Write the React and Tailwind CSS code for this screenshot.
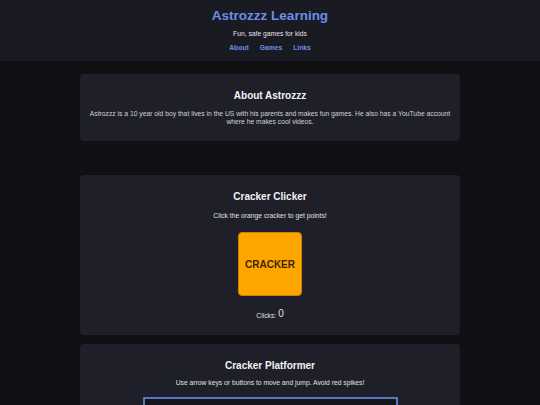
import React, { useState } from "react";

function Card({ title, children, className = "" }) {
  return (
    <section className={`bg-[#1e1f29] rounded-[4px] px-[8px] text-center ${className}`}>
      <h2 className="text-[10px] leading-[12px] font-bold text-[#f2f2f2]">{title}</h2>
      {children}
    </section>
  );
}

export default function App() {
  const [clicks, setClicks] = useState(0);

  return (
    <div className="min-h-[405px] bg-[#0f1014] font-['Liberation_Sans',Arial,sans-serif] text-[#d6d6d6]">
      {/* Header */}
      <header className="bg-[#191a22] pt-[8px] pb-[9px] text-center">
        <h1 className="text-[13.5px] leading-[16px] font-bold text-[#6b8ee6]">Astrozzz Learning</h1>
        <p className="mt-[6px] text-[6.75px] leading-[8px] text-[#e4e4e4]">Fun, safe games for kids</p>
        <nav className="mt-[6px] flex justify-center gap-[11px] text-[6.75px] leading-[8px] font-bold">
          <a href="#about" className="text-[#6f90e2]">About</a>
          <a href="#games" className="text-[#6f90e2]">Games</a>
          <a href="#links" className="text-[#6f90e2]">Links</a>
        </nav>
      </header>

      <main className="w-[380px] mx-auto pt-[13px]">
        <Card title="About Astrozzz" className="pt-[16px] pb-[15px]">
          <p className="mt-[8px] text-[6.75px] leading-[8px] text-[#d2d2d2]">
            Astrozzz is a 10 year old boy that lives in the US with his parents and makes fun games. He also has a YouTube account where he makes cool videos.
          </p>
        </Card>

        <Card title="Cracker Clicker" className="mt-[34px] pt-[16px] pb-[15px]">
          <p className="mt-[9px] text-[6.75px] leading-[8px] text-[#e0e0e0]">Click the orange cracker to get points!</p>
          <button
            onClick={() => setClicks(clicks + 1)}
            className="mt-[12px] mx-auto flex items-center justify-center w-[64px] h-[64px] rounded-[4px] bg-[#ffa500] border border-[#c98200] text-[10px] font-bold text-[#3b2600]"
          >
            CRACKER
          </button>
          <p className="mt-[12px] h-[12px] flex items-end justify-center gap-[2px] text-[#e0e0e0]">
            <span className="text-[6.75px] leading-[8px]">Clicks:</span>
            <span className="text-[10px] leading-[12px]">{clicks}</span>
          </p>
        </Card>

        <Card title="Cracker Platformer" className="mt-[9px] pt-[16px] pb-[16px]">
          <p className="mt-[7px] text-[6.75px] leading-[8px] text-[#e0e0e0]">Use arrow keys or buttons to move and jump. Avoid red spikes!</p>
          <div className="mt-[10px] mx-auto w-[255px] h-[140px] border-2 border-[#5a78c2] bg-[#15161d]" />
        </Card>
      </main>
    </div>
  );
}
